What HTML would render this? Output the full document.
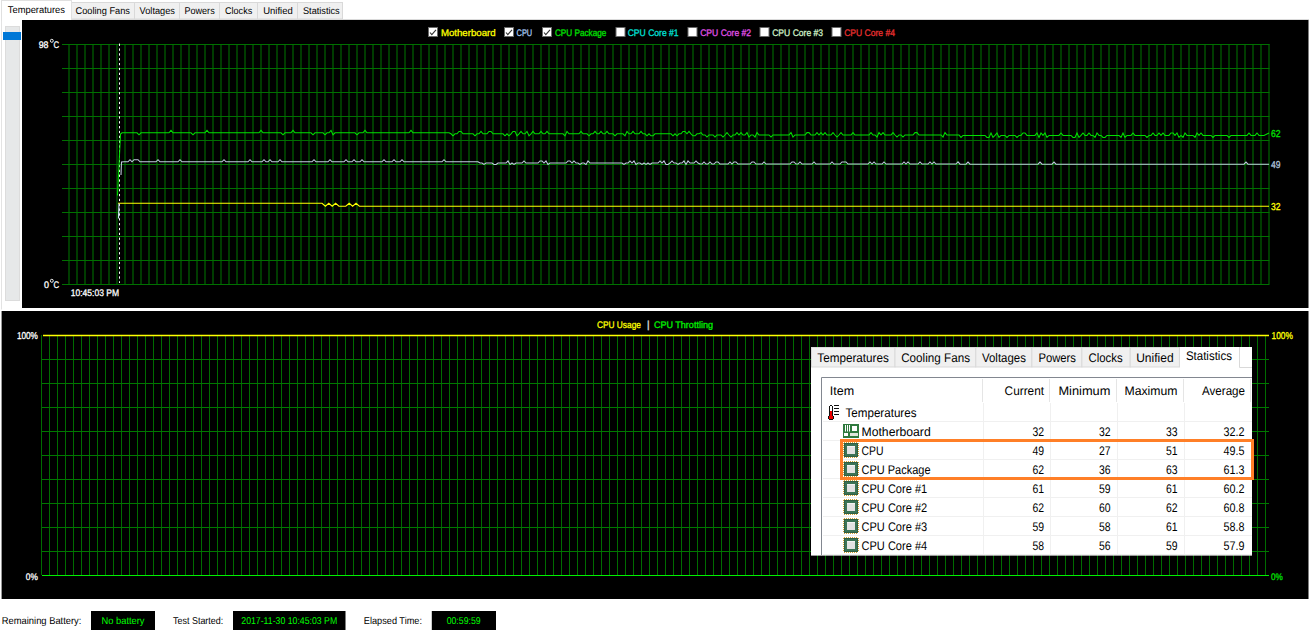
<!DOCTYPE html>
<html><head><meta charset="utf-8"><title>Stress Test</title>
<style>html,body{margin:0;padding:0;background:#fff;overflow:hidden;width:1310px;height:633px}svg{display:block}</style>
</head><body>
<svg width="1310" height="633" viewBox="0 0 1310 633" font-family='"Liberation Sans", sans-serif' text-rendering="geometricPrecision"><rect x="0" y="0" width="1310" height="633" fill="#ffffff"/>
<rect x="1" y="19" width="1308" height="291" fill="#ffffff"/>
<path d="M1.5 19.5 V309.5" stroke="#e3e3e3" stroke-width="1" fill="none"/>
<path d="M71 19.5 H1309" stroke="#dadada" stroke-width="1" fill="none"/>
<rect x="71.5" y="2.5" width="63" height="16.5" fill="#f0f0f0" stroke="#d9d9d9" stroke-width="1"/>
<text x="75.5" y="14.0" font-size="9.8" fill="#000" text-anchor="start" textLength="54.5" lengthAdjust="spacingAndGlyphs">Cooling Fans</text>
<rect x="134.5" y="2.5" width="45" height="16.5" fill="#f0f0f0" stroke="#d9d9d9" stroke-width="1"/>
<text x="139.6" y="14.0" font-size="9.8" fill="#000" text-anchor="start" textLength="35.3" lengthAdjust="spacingAndGlyphs">Voltages</text>
<rect x="179.5" y="2.5" width="40" height="16.5" fill="#f0f0f0" stroke="#d9d9d9" stroke-width="1"/>
<text x="184.4" y="14.0" font-size="9.8" fill="#000" text-anchor="start" textLength="30.3" lengthAdjust="spacingAndGlyphs">Powers</text>
<rect x="219.5" y="2.5" width="38" height="16.5" fill="#f0f0f0" stroke="#d9d9d9" stroke-width="1"/>
<text x="225.0" y="14.0" font-size="9.8" fill="#000" text-anchor="start" textLength="27.2" lengthAdjust="spacingAndGlyphs">Clocks</text>
<rect x="257.5" y="2.5" width="40" height="16.5" fill="#f0f0f0" stroke="#d9d9d9" stroke-width="1"/>
<text x="263.2" y="14.0" font-size="9.8" fill="#000" text-anchor="start" textLength="29.5" lengthAdjust="spacingAndGlyphs">Unified</text>
<rect x="297.5" y="2.5" width="45" height="16.5" fill="#f0f0f0" stroke="#d9d9d9" stroke-width="1"/>
<text x="303.0" y="14.0" font-size="9.8" fill="#000" text-anchor="start" textLength="36.7" lengthAdjust="spacingAndGlyphs">Statistics</text>
<rect x="1.5" y="0.5" width="70" height="19.5" fill="#ffffff" stroke="#e0e0e0" stroke-width="1"/>
<rect x="2" y="19" width="69" height="2" fill="#ffffff"/>
<text x="7.8" y="13.0" font-size="9.8" fill="#000" text-anchor="start" textLength="57.2" lengthAdjust="spacingAndGlyphs">Temperatures</text>
<rect x="5.5" y="26.5" width="14" height="274" fill="#e6e8e9" stroke="#dcdcdc" stroke-width="1"/>
<rect x="3" y="32" width="18" height="8" fill="#0078d7"/>
<rect x="22" y="20" width="1286.5" height="288" fill="#000000"/>
<path d="M69 44V284M77 44V284M85 44V284M93 44V284M101 44V284M109 44V284M117 44V284M125 44V284M133 44V284M141 44V284M149 44V284M157 44V284M165 44V284M173 44V284M181 44V284M189 44V284M197 44V284M205 44V284M213 44V284M221 44V284M229 44V284M237 44V284M245 44V284M253 44V284M261 44V284M269 44V284M277 44V284M285 44V284M293 44V284M301 44V284M309 44V284M317 44V284M325 44V284M333 44V284M341 44V284M349 44V284M357 44V284M365 44V284M373 44V284M381 44V284M389 44V284M397 44V284M405 44V284M413 44V284M421 44V284M429 44V284M437 44V284M445 44V284M453 44V284M461 44V284M469 44V284M477 44V284M485 44V284M493 44V284M501 44V284M509 44V284M517 44V284M525 44V284M533 44V284M541 44V284M549 44V284M557 44V284M565 44V284M573 44V284M581 44V284M589 44V284M597 44V284M605 44V284M613 44V284M621 44V284M629 44V284M637 44V284M645 44V284M653 44V284M661 44V284M669 44V284M677 44V284M685 44V284M693 44V284M701 44V284M709 44V284M717 44V284M725 44V284M733 44V284M741 44V284M749 44V284M757 44V284M765 44V284M773 44V284M781 44V284M789 44V284M797 44V284M805 44V284M813 44V284M821 44V284M829 44V284M837 44V284M845 44V284M853 44V284M861 44V284M869 44V284M877 44V284M885 44V284M893 44V284M901 44V284M909 44V284M917 44V284M925 44V284M933 44V284M941 44V284M949 44V284M957 44V284M965 44V284M973 44V284M981 44V284M989 44V284M997 44V284M1005 44V284M1013 44V284M1021 44V284M1029 44V284M1037 44V284M1045 44V284M1053 44V284M1061 44V284M1069 44V284M1077 44V284M1085 44V284M1093 44V284M1101 44V284M1109 44V284M1117 44V284M1125 44V284M1133 44V284M1141 44V284M1149 44V284M1157 44V284M1165 44V284M1173 44V284M1181 44V284M1189 44V284M1197 44V284M1205 44V284M1213 44V284M1221 44V284M1229 44V284M1237 44V284M1245 44V284M1253 44V284M1261 44V284M1269 44V284" stroke="#003c00" stroke-width="2" fill="none"/>
<path d="M62 44.5H1269.5M62 68.5H1269.5M62 92.5H1269.5M62 116.5H1269.5M62 140.5H1269.5M62 164.5H1269.5M62 188.5H1269.5M62 212.5H1269.5M62 236.5H1269.5M62 260.5H1269.5M62 284.5H1269.5" stroke="#007000" stroke-width="1" fill="none"/>
<rect x="428.5" y="27.5" width="9" height="9" fill="#ffffff" stroke="#6a6a6a" stroke-width="1"/>
<path d="M430 32.5L431.8 34.6L436 29.8" stroke="#333" stroke-width="1.1" fill="none"/>
<text x="440.9" y="36.0" font-size="9.5" fill="#ffff00" text-anchor="start" textLength="54.7" lengthAdjust="spacingAndGlyphs" stroke="#ffff00" stroke-width="0.3">Motherboard</text>
<rect x="504.5" y="27.5" width="9" height="9" fill="#ffffff" stroke="#6a6a6a" stroke-width="1"/>
<path d="M506 32.5L507.8 34.6L512 29.8" stroke="#333" stroke-width="1.1" fill="none"/>
<text x="516.6" y="36.0" font-size="9.5" fill="#a8c8f0" text-anchor="start" textLength="15.6" lengthAdjust="spacingAndGlyphs" stroke="#a8c8f0" stroke-width="0.3">CPU</text>
<rect x="542.5" y="27.5" width="9" height="9" fill="#ffffff" stroke="#6a6a6a" stroke-width="1"/>
<path d="M544 32.5L545.8 34.6L550 29.8" stroke="#333" stroke-width="1.1" fill="none"/>
<text x="554.9" y="36.0" font-size="9.5" fill="#00e000" text-anchor="start" textLength="51.5" lengthAdjust="spacingAndGlyphs" stroke="#00e000" stroke-width="0.3">CPU Package</text>
<rect x="616.0" y="27.5" width="9" height="9" fill="#ffffff" stroke="#6a6a6a" stroke-width="1"/>
<text x="627.7" y="36.0" font-size="9.5" fill="#00e0d8" text-anchor="start" textLength="50.9" lengthAdjust="spacingAndGlyphs" stroke="#00e0d8" stroke-width="0.3">CPU Core #1</text>
<rect x="688.0" y="27.5" width="9" height="9" fill="#ffffff" stroke="#6a6a6a" stroke-width="1"/>
<text x="700.2" y="36.0" font-size="9.5" fill="#e050e8" text-anchor="start" textLength="50.9" lengthAdjust="spacingAndGlyphs" stroke="#e050e8" stroke-width="0.3">CPU Core #2</text>
<rect x="760.0" y="27.5" width="9" height="9" fill="#ffffff" stroke="#6a6a6a" stroke-width="1"/>
<text x="772.2" y="36.0" font-size="9.5" fill="#d0f0c8" text-anchor="start" textLength="50.9" lengthAdjust="spacingAndGlyphs" stroke="#d0f0c8" stroke-width="0.3">CPU Core #3</text>
<rect x="832.0" y="27.5" width="9" height="9" fill="#ffffff" stroke="#6a6a6a" stroke-width="1"/>
<text x="844.2" y="36.0" font-size="9.5" fill="#e83030" text-anchor="start" textLength="50.8" lengthAdjust="spacingAndGlyphs" stroke="#e83030" stroke-width="0.3">CPU Core #4</text>
<text x="38.7" y="48.0" font-size="9.5" fill="#fff" text-anchor="start" textLength="9.8" lengthAdjust="spacingAndGlyphs" stroke="#fff" stroke-width="0.3">98</text>
<circle cx="51.8" cy="40.8" r="1.5" fill="none" stroke="#fff" stroke-width="0.9"/>
<text x="53.6" y="48.0" font-size="9.5" fill="#fff" text-anchor="start" textLength="5.6" lengthAdjust="spacingAndGlyphs" stroke="#fff" stroke-width="0.3">C</text>
<text x="44.0" y="288.0" font-size="9.5" fill="#fff" text-anchor="start" textLength="5.0" lengthAdjust="spacingAndGlyphs" stroke="#fff" stroke-width="0.3">0</text>
<circle cx="51.8" cy="280.8" r="1.5" fill="none" stroke="#fff" stroke-width="0.9"/>
<text x="53.6" y="288.0" font-size="9.5" fill="#fff" text-anchor="start" textLength="5.6" lengthAdjust="spacingAndGlyphs" stroke="#fff" stroke-width="0.3">C</text>
<text x="70.8" y="295.6" font-size="9.5" fill="#fff" text-anchor="start" textLength="48.2" lengthAdjust="spacingAndGlyphs" stroke="#fff" stroke-width="0.3">10:45:03 PM</text>
<text x="1271.0" y="137.0" font-size="10" fill="#00e000" text-anchor="start" textLength="9.5" lengthAdjust="spacingAndGlyphs" stroke="#00e000" stroke-width="0.3">62</text>
<text x="1271.0" y="168.0" font-size="10" fill="#b0c4de" text-anchor="start" textLength="9.5" lengthAdjust="spacingAndGlyphs" stroke="#b0c4de" stroke-width="0.3">49</text>
<text x="1271.0" y="210.0" font-size="10" fill="#ffff00" text-anchor="start" textLength="9.5" lengthAdjust="spacingAndGlyphs" stroke="#ffff00" stroke-width="0.3">32</text>
<path d="M119.5 43.6V283" stroke="#ffffff" stroke-width="1" stroke-dasharray="2.3,2.55" fill="none"/>
<path d="M118.0 203.3 L322.0 203.3 L325.4 206.2 L328.8 203.3 L332.2 206.2 L335.6 203.3 L339.0 206.2 L342.4 206.2 L345.8 206.2 L349.2 203.3 L352.6 206.2 L356.0 203.3 L359.4 206.2 L1269.0 206.2" stroke="#ffff00" stroke-width="1.1" fill="none" stroke-linejoin="miter"/>
<path d="M119 203.5 L118.5 218.5" stroke="#c8dcf0" stroke-width="1.2" fill="none"/>
<path d="M121.0 175.0 L121.5 162.0 L124.0 161.8 L126.0 161.8 L128.0 161.8 L130.0 159.7 L132.0 161.8 L134.0 159.7 L136.0 159.7 L138.0 159.7 L140.0 161.8 L142.0 161.8 L144.0 161.8 L146.0 161.8 L148.0 161.8 L150.0 161.8 L152.0 161.8 L154.0 161.8 L156.0 161.8 L158.0 159.7 L160.0 161.8 L162.0 161.8 L164.0 161.8 L166.0 161.8 L168.0 161.8 L170.0 161.8 L172.0 161.8 L174.0 161.8 L176.0 161.8 L178.0 161.8 L180.0 159.7 L182.0 161.8 L184.0 161.8 L186.0 161.8 L188.0 161.8 L190.0 161.8 L192.0 161.8 L194.0 161.8 L196.0 161.8 L198.0 161.8 L200.0 161.8 L202.0 161.8 L204.0 161.8 L206.0 161.8 L208.0 161.8 L210.0 161.8 L212.0 161.8 L214.0 161.8 L216.0 161.8 L218.0 161.8 L220.0 161.8 L222.0 161.8 L224.0 159.7 L226.0 161.8 L228.0 161.8 L230.0 161.8 L232.0 161.8 L234.0 161.8 L236.0 161.8 L238.0 161.8 L240.0 161.8 L242.0 161.8 L244.0 161.8 L246.0 161.8 L248.0 161.8 L250.0 159.7 L252.0 161.8 L254.0 161.8 L256.0 161.8 L258.0 161.8 L260.0 161.8 L262.0 161.8 L264.0 159.7 L266.0 161.8 L268.0 161.8 L270.0 159.7 L272.0 161.8 L274.0 161.8 L276.0 161.8 L278.0 161.8 L280.0 159.7 L282.0 161.8 L284.0 161.8 L286.0 161.8 L288.0 161.8 L290.0 161.8 L292.0 161.8 L294.0 161.8 L296.0 161.8 L298.0 161.8 L300.0 161.8 L302.0 161.8 L304.0 161.8 L306.0 161.8 L308.0 161.8 L310.0 161.8 L312.0 161.8 L314.0 159.7 L316.0 161.8 L318.0 161.8 L320.0 161.8 L322.0 161.8 L324.0 161.8 L326.0 161.8 L328.0 161.8 L330.0 159.7 L332.0 161.8 L334.0 161.8 L336.0 161.8 L338.0 161.8 L340.0 161.8 L342.0 161.8 L344.0 161.8 L346.0 159.7 L348.0 161.8 L350.0 161.8 L352.0 161.8 L354.0 159.7 L356.0 161.8 L358.0 161.8 L360.0 161.8 L362.0 159.7 L364.0 161.8 L366.0 161.8 L368.0 161.8 L370.0 161.8 L372.0 161.8 L374.0 161.8 L376.0 161.8 L378.0 161.8 L380.0 161.8 L382.0 161.8 L384.0 159.7 L386.0 161.8 L388.0 161.8 L390.0 161.8 L392.0 161.8 L394.0 159.7 L396.0 161.8 L398.0 161.8 L400.0 161.8 L402.0 159.7 L404.0 161.8 L406.0 161.8 L408.0 161.8 L410.0 161.8 L412.0 161.8 L414.0 161.8 L416.0 161.8 L418.0 161.8 L420.0 161.8 L422.0 161.8 L424.0 161.8 L426.0 161.8 L428.0 161.8 L430.0 161.8 L432.0 161.8 L434.0 161.8 L436.0 161.8 L438.0 161.8 L440.0 161.8 L442.0 161.8 L444.0 159.7 L446.0 161.8 L448.0 161.8 L450.0 161.8 L452.0 161.8 L454.0 161.8 L456.0 161.8 L458.0 161.8 L460.0 161.8 L462.0 161.8 L464.0 161.8 L466.0 161.8 L468.0 161.8 L470.0 161.8 L472.0 161.8 L474.0 161.8 L476.0 161.8 L478.0 161.8 L480.0 163.0 L482.0 163.0 L484.0 164.4 L486.0 163.0 L488.0 163.0 L490.0 163.0 L492.0 163.0 L494.0 164.4 L496.0 164.4 L498.0 163.0 L500.0 163.0 L502.0 163.0 L504.0 163.0 L506.0 163.0 L508.0 160.9 L510.0 164.4 L512.0 163.0 L514.0 164.4 L516.0 163.0 L518.0 163.0 L520.0 163.0 L522.0 163.0 L524.0 160.9 L526.0 163.0 L528.0 163.0 L530.0 163.0 L532.0 163.0 L534.0 163.0 L536.0 163.0 L538.0 163.0 L540.0 160.9 L542.0 160.9 L544.0 163.0 L546.0 160.9 L548.0 164.4 L550.0 163.0 L552.0 163.0 L554.0 163.0 L556.0 163.0 L558.0 163.0 L560.0 163.0 L562.0 163.0 L564.0 163.0 L566.0 163.0 L568.0 160.9 L570.0 160.9 L572.0 163.0 L574.0 160.9 L576.0 163.0 L578.0 163.0 L580.0 164.4 L582.0 163.0 L584.0 163.0 L586.0 164.4 L588.0 160.9 L590.0 163.0 L592.0 163.0 L594.0 163.0 L596.0 163.0 L598.0 163.0 L600.0 163.0 L602.0 163.0 L604.0 163.0 L606.0 163.0 L608.0 163.0 L610.0 163.0 L612.0 163.0 L614.0 163.0 L616.0 163.0 L618.0 163.0 L620.0 163.0 L622.0 163.0 L624.0 164.4 L626.0 163.0 L628.0 163.0 L630.0 160.9 L632.0 163.0 L634.0 160.9 L636.0 164.4 L638.0 163.0 L640.0 163.0 L642.0 164.4 L644.0 163.0 L646.0 164.4 L648.0 163.0 L650.0 164.4 L652.0 163.0 L654.0 163.0 L656.0 163.0 L658.0 163.0 L660.0 160.9 L662.0 163.0 L664.0 160.9 L666.0 164.4 L668.0 164.4 L670.0 163.0 L672.0 160.9 L674.0 163.0 L676.0 163.0 L678.0 164.4 L680.0 163.0 L682.0 163.0 L684.0 160.9 L686.0 164.4 L688.0 160.9 L690.0 163.0 L692.0 163.0 L694.0 163.0 L696.0 160.9 L698.0 163.0 L700.0 164.0 L702.0 164.0 L704.0 161.9 L706.0 164.0 L708.0 164.0 L710.0 161.9 L712.0 164.0 L714.0 164.0 L716.0 161.9 L718.0 161.9 L720.0 164.0 L722.0 164.0 L724.0 164.0 L726.0 164.0 L728.0 164.0 L730.0 161.9 L732.0 164.0 L734.0 161.9 L736.0 161.9 L738.0 164.0 L740.0 164.0 L742.0 164.0 L744.0 164.0 L746.0 164.0 L748.0 164.0 L750.0 164.0 L752.0 161.9 L754.0 161.9 L756.0 164.0 L758.0 164.0 L760.0 164.0 L762.0 164.0 L764.0 161.9 L766.0 164.0 L768.0 164.0 L770.0 164.0 L772.0 164.0 L774.0 164.0 L776.0 164.0 L778.0 164.0 L780.0 164.0 L782.0 164.0 L784.0 164.0 L786.0 164.0 L788.0 164.0 L790.0 164.0 L792.0 161.9 L794.0 161.9 L796.0 164.0 L798.0 164.0 L800.0 161.9 L802.0 164.0 L804.0 164.0 L806.0 164.0 L808.0 164.0 L810.0 164.0 L812.0 164.0 L814.0 161.9 L816.0 164.0 L818.0 164.0 L820.0 164.0 L822.0 164.0 L824.0 164.0 L826.0 164.0 L828.0 164.0 L830.0 164.0 L832.0 161.9 L834.0 164.0 L836.0 164.0 L838.0 164.0 L840.0 164.0 L842.0 161.9 L844.0 161.9 L846.0 161.9 L848.0 164.0 L850.0 164.0 L852.0 164.0 L854.0 164.0 L856.0 164.0 L858.0 164.0 L860.0 164.0 L862.0 164.0 L864.0 164.0 L866.0 164.0 L868.0 164.0 L870.0 161.9 L872.0 164.0 L874.0 161.9 L876.0 164.0 L878.0 164.0 L880.0 164.0 L882.0 164.0 L884.0 161.9 L886.0 164.0 L888.0 164.0 L890.0 164.0 L892.0 164.0 L894.0 164.0 L896.0 164.0 L898.0 164.0 L900.0 164.0 L902.0 164.0 L904.0 161.9 L906.0 164.0 L908.0 161.9 L910.0 164.0 L912.0 164.0 L914.0 164.0 L916.0 164.0 L918.0 164.0 L920.0 161.9 L922.0 164.0 L924.0 164.0 L926.0 164.0 L928.0 164.0 L930.0 161.9 L932.0 164.0 L934.0 161.9 L936.0 164.0 L938.0 164.0 L940.0 164.0 L942.0 164.0 L944.0 164.0 L946.0 164.0 L948.0 164.0 L950.0 164.0 L952.0 164.0 L954.0 164.0 L956.0 164.0 L958.0 161.9 L960.0 164.2 L962.0 164.2 L964.0 164.2 L966.0 164.2 L968.0 162.1 L970.0 164.2 L972.0 164.2 L974.0 164.2 L976.0 164.2 L978.0 164.2 L980.0 164.2 L982.0 164.2 L984.0 164.2 L986.0 164.2 L988.0 164.2 L990.0 164.2 L992.0 164.2 L994.0 164.2 L996.0 164.2 L998.0 164.2 L1000.0 164.2 L1002.0 164.2 L1004.0 164.2 L1006.0 164.2 L1008.0 164.2 L1010.0 164.2 L1012.0 164.2 L1014.0 164.2 L1016.0 164.2 L1018.0 164.2 L1020.0 164.2 L1022.0 164.2 L1024.0 164.2 L1026.0 164.2 L1028.0 164.2 L1030.0 164.2 L1032.0 164.2 L1034.0 164.2 L1036.0 164.2 L1038.0 164.2 L1040.0 162.1 L1042.0 164.2 L1044.0 164.2 L1046.0 164.2 L1048.0 164.2 L1050.0 164.2 L1052.0 164.2 L1054.0 162.1 L1056.0 164.2 L1058.0 164.2 L1060.0 164.2 L1062.0 164.2 L1064.0 164.2 L1066.0 164.2 L1068.0 164.2 L1070.0 164.2 L1072.0 164.2 L1074.0 164.2 L1076.0 164.2 L1078.0 164.2 L1080.0 164.2 L1082.0 164.2 L1084.0 164.2 L1086.0 164.2 L1088.0 164.2 L1090.0 164.2 L1092.0 164.2 L1094.0 164.2 L1096.0 164.2 L1098.0 164.2 L1100.0 164.2 L1102.0 164.2 L1104.0 164.2 L1106.0 164.2 L1108.0 164.2 L1110.0 164.2 L1112.0 164.2 L1114.0 164.2 L1116.0 164.2 L1118.0 164.2 L1120.0 164.2 L1122.0 164.2 L1124.0 164.2 L1126.0 164.2 L1128.0 164.2 L1130.0 164.2 L1132.0 164.2 L1134.0 164.2 L1136.0 164.2 L1138.0 164.2 L1140.0 164.2 L1142.0 164.2 L1144.0 164.2 L1146.0 164.2 L1148.0 164.2 L1150.0 164.2 L1152.0 164.2 L1154.0 164.2 L1156.0 164.2 L1158.0 164.2 L1160.0 164.2 L1162.0 164.2 L1164.0 164.2 L1166.0 164.2 L1168.0 164.2 L1170.0 164.2 L1172.0 164.2 L1174.0 164.2 L1176.0 164.2 L1178.0 164.2 L1180.0 164.2 L1182.0 164.2 L1184.0 164.2 L1186.0 164.2 L1188.0 164.2 L1190.0 164.2 L1192.0 164.2 L1194.0 164.2 L1196.0 164.2 L1198.0 164.2 L1200.0 164.2 L1202.0 164.2 L1204.0 164.2 L1206.0 164.2 L1208.0 164.2 L1210.0 164.2 L1212.0 164.2 L1214.0 164.2 L1216.0 164.2 L1218.0 164.2 L1220.0 164.2 L1222.0 164.2 L1224.0 164.2 L1226.0 164.2 L1228.0 164.2 L1230.0 164.2 L1232.0 164.2 L1234.0 164.2 L1236.0 164.2 L1238.0 164.2 L1240.0 164.2 L1242.0 164.2 L1244.0 164.2 L1246.0 162.1 L1248.0 164.2 L1250.0 164.2 L1252.0 164.2 L1254.0 164.2 L1256.0 164.2 L1258.0 164.2 L1260.0 164.2 L1262.0 164.2 L1269.0 164.2" stroke="#c0cce0" stroke-width="1.05" fill="none" stroke-linejoin="miter"/>
<path d="M117.5 195.5 L120.5 134.0 L122.0 132.8 L125.0 132.8 L127.0 132.8 L129.0 132.8 L131.0 132.8 L133.0 132.8 L135.0 132.8 L137.0 132.8 L139.0 134.8 L141.0 132.8 L143.0 132.8 L145.0 132.8 L147.0 132.8 L149.0 132.8 L151.0 132.8 L153.0 132.8 L155.0 132.8 L157.0 132.8 L159.0 132.8 L161.0 132.8 L163.0 132.8 L165.0 132.8 L167.0 132.8 L169.0 132.8 L171.0 130.4 L173.0 132.8 L175.0 132.8 L177.0 132.8 L179.0 132.8 L181.0 132.8 L183.0 132.8 L185.0 132.8 L187.0 132.8 L189.0 132.8 L191.0 132.8 L193.0 134.8 L195.0 132.8 L197.0 132.8 L199.0 132.8 L201.0 132.8 L203.0 132.8 L205.0 132.8 L207.0 130.4 L209.0 132.8 L211.0 132.8 L213.0 132.8 L215.0 132.8 L217.0 132.8 L219.0 132.8 L221.0 132.8 L223.0 132.8 L225.0 132.8 L227.0 132.8 L229.0 132.8 L231.0 132.8 L233.0 132.8 L235.0 132.8 L237.0 132.8 L239.0 132.8 L241.0 132.8 L243.0 132.8 L245.0 132.8 L247.0 132.8 L249.0 132.8 L251.0 132.8 L253.0 132.8 L255.0 132.8 L257.0 132.8 L259.0 132.8 L261.0 130.4 L263.0 132.8 L265.0 132.8 L267.0 132.8 L269.0 132.8 L271.0 132.8 L273.0 132.8 L275.0 132.8 L277.0 132.8 L279.0 132.8 L281.0 132.8 L283.0 134.8 L285.0 132.8 L287.0 132.8 L289.0 132.8 L291.0 132.8 L293.0 130.4 L295.0 132.8 L297.0 132.8 L299.0 132.8 L301.0 132.8 L303.0 132.8 L305.0 132.8 L307.0 132.8 L309.0 132.8 L311.0 132.8 L313.0 134.8 L315.0 132.8 L317.0 132.8 L319.0 132.8 L321.0 132.8 L323.0 132.8 L325.0 134.8 L327.0 132.8 L329.0 132.8 L331.0 130.4 L333.0 134.8 L335.0 132.8 L337.0 132.8 L339.0 132.8 L341.0 132.8 L343.0 132.8 L345.0 132.8 L347.0 132.8 L349.0 132.8 L351.0 132.8 L353.0 132.8 L355.0 132.8 L357.0 134.8 L359.0 132.8 L361.0 132.8 L363.0 132.8 L365.0 130.4 L367.0 132.8 L369.0 132.8 L371.0 132.8 L373.0 132.8 L375.0 132.8 L377.0 132.8 L379.0 132.8 L381.0 132.8 L383.0 132.8 L385.0 132.8 L387.0 132.8 L389.0 132.8 L391.0 132.8 L393.0 132.8 L395.0 132.8 L397.0 132.8 L399.0 132.8 L401.0 132.8 L403.0 132.8 L405.0 132.8 L407.0 132.8 L409.0 132.8 L411.0 130.4 L413.0 132.8 L415.0 132.8 L417.0 132.8 L419.0 132.8 L421.0 132.8 L423.0 132.8 L425.0 132.8 L427.0 132.8 L429.0 132.8 L431.0 132.8 L433.0 132.8 L435.0 132.8 L437.0 132.8 L439.0 132.8 L441.0 132.8 L443.0 132.8 L445.0 132.8 L447.0 132.8 L449.0 132.8 L451.0 133.8 L453.0 135.8 L455.0 133.8 L457.0 133.8 L459.0 131.4 L461.0 131.4 L463.0 133.8 L465.0 133.8 L467.0 133.8 L469.0 133.8 L471.0 133.8 L473.0 133.8 L475.0 135.8 L477.0 133.8 L479.0 133.8 L481.0 131.4 L483.0 133.8 L485.0 133.8 L487.0 133.8 L489.0 131.4 L491.0 131.4 L493.0 133.8 L495.0 133.8 L497.0 133.8 L499.0 133.8 L501.0 133.8 L503.0 133.8 L505.0 135.8 L507.0 133.8 L509.0 135.8 L511.0 133.8 L513.0 131.4 L515.0 131.4 L517.0 135.8 L519.0 133.8 L521.0 131.4 L523.0 133.8 L525.0 133.8 L527.0 131.4 L529.0 135.8 L531.0 133.8 L533.0 131.4 L535.0 133.8 L537.0 133.8 L539.0 133.8 L541.0 131.4 L543.0 133.8 L545.0 133.8 L547.0 131.4 L549.0 133.8 L551.0 133.8 L553.0 133.8 L555.0 133.8 L557.0 133.8 L559.0 133.8 L561.0 133.8 L563.0 133.8 L565.0 135.8 L567.0 131.4 L569.0 133.8 L571.0 133.8 L573.0 133.8 L575.0 133.8 L577.0 133.8 L579.0 133.8 L581.0 131.4 L583.0 133.8 L585.0 133.8 L587.0 133.8 L589.0 135.8 L591.0 133.8 L593.0 133.8 L595.0 131.4 L597.0 133.8 L599.0 133.8 L601.0 131.4 L603.0 133.8 L605.0 133.8 L607.0 131.4 L609.0 133.8 L611.0 133.8 L613.0 133.8 L615.0 135.8 L617.0 133.8 L619.0 133.8 L621.0 133.8 L623.0 133.8 L625.0 135.8 L627.0 131.4 L629.0 133.8 L631.0 133.8 L633.0 131.4 L635.0 133.8 L637.0 133.8 L639.0 133.8 L641.0 131.4 L643.0 133.8 L645.0 133.8 L647.0 135.8 L649.0 133.8 L651.0 135.8 L653.0 135.8 L655.0 133.8 L657.0 133.8 L659.0 133.8 L661.0 133.8 L663.0 133.8 L665.0 133.8 L667.0 133.8 L669.0 133.8 L671.0 133.8 L673.0 135.8 L675.0 133.8 L677.0 135.8 L679.0 133.8 L681.0 133.8 L683.0 131.4 L685.0 131.4 L687.0 133.8 L689.0 131.4 L691.0 133.8 L693.0 135.8 L695.0 135.8 L697.0 133.8 L699.0 133.8 L701.0 132.6 L703.0 135.0 L705.0 135.0 L707.0 137.0 L709.0 135.0 L711.0 135.0 L713.0 135.0 L715.0 137.0 L717.0 135.0 L719.0 135.0 L721.0 135.0 L723.0 137.0 L725.0 135.0 L727.0 132.6 L729.0 135.0 L731.0 137.0 L733.0 135.0 L735.0 135.0 L737.0 132.6 L739.0 135.0 L741.0 132.6 L743.0 135.0 L745.0 135.0 L747.0 132.6 L749.0 137.0 L751.0 135.0 L753.0 135.0 L755.0 137.0 L757.0 132.6 L759.0 135.0 L761.0 135.0 L763.0 135.0 L765.0 135.0 L767.0 135.0 L769.0 135.0 L771.0 137.0 L773.0 135.0 L775.0 135.0 L777.0 135.0 L779.0 135.0 L781.0 135.0 L783.0 135.0 L785.0 135.0 L787.0 135.0 L789.0 135.0 L791.0 132.6 L793.0 137.0 L795.0 135.0 L797.0 135.0 L799.0 135.0 L801.0 135.0 L803.0 135.0 L805.0 135.0 L807.0 132.6 L809.0 132.6 L811.0 135.0 L813.0 135.0 L815.0 135.0 L817.0 132.6 L819.0 135.0 L821.0 132.6 L823.0 135.0 L825.0 132.6 L827.0 135.0 L829.0 135.0 L831.0 135.0 L833.0 132.6 L835.0 135.0 L837.0 137.0 L839.0 135.0 L841.0 132.6 L843.0 135.0 L845.0 135.0 L847.0 135.0 L849.0 135.0 L851.0 135.0 L853.0 132.6 L855.0 135.0 L857.0 135.0 L859.0 135.0 L861.0 135.0 L863.0 135.0 L865.0 135.0 L867.0 135.0 L869.0 135.0 L871.0 132.6 L873.0 135.0 L875.0 135.0 L877.0 137.0 L879.0 132.6 L881.0 135.0 L883.0 132.6 L885.0 135.0 L887.0 135.0 L889.0 135.0 L891.0 135.0 L893.0 132.6 L895.0 135.0 L897.0 137.0 L899.0 135.0 L901.0 135.0 L903.0 137.0 L905.0 135.0 L907.0 135.0 L909.0 135.0 L911.0 135.0 L913.0 135.0 L915.0 132.6 L917.0 132.6 L919.0 135.0 L921.0 135.0 L923.0 135.0 L925.0 135.0 L927.0 135.0 L929.0 135.0 L931.0 135.0 L933.0 135.0 L935.0 135.0 L937.0 135.0 L939.0 135.0 L941.0 135.0 L943.0 137.0 L945.0 132.6 L947.0 135.0 L949.0 135.0 L951.0 135.0 L953.0 135.0 L955.0 135.0 L957.0 135.0 L959.0 135.0 L961.0 137.4 L963.0 135.4 L965.0 135.4 L967.0 135.4 L969.0 135.4 L971.0 135.4 L973.0 135.4 L975.0 135.4 L977.0 135.4 L979.0 135.4 L981.0 135.4 L983.0 135.4 L985.0 135.4 L987.0 137.4 L989.0 137.4 L991.0 133.0 L993.0 137.4 L995.0 135.4 L997.0 133.0 L999.0 137.4 L1001.0 135.4 L1003.0 135.4 L1005.0 135.4 L1007.0 137.4 L1009.0 135.4 L1011.0 135.4 L1013.0 135.4 L1015.0 135.4 L1017.0 137.4 L1019.0 135.4 L1021.0 135.4 L1023.0 133.0 L1025.0 133.0 L1027.0 135.4 L1029.0 135.4 L1031.0 135.4 L1033.0 135.4 L1035.0 135.4 L1037.0 133.0 L1039.0 137.4 L1041.0 133.0 L1043.0 135.4 L1045.0 133.0 L1047.0 137.4 L1049.0 135.4 L1051.0 135.4 L1053.0 135.4 L1055.0 135.4 L1057.0 135.4 L1059.0 135.4 L1061.0 133.0 L1063.0 135.4 L1065.0 135.4 L1067.0 135.4 L1069.0 135.4 L1071.0 135.4 L1073.0 137.4 L1075.0 137.4 L1077.0 133.0 L1079.0 137.4 L1081.0 135.4 L1083.0 133.0 L1085.0 135.4 L1087.0 135.4 L1089.0 133.0 L1091.0 135.4 L1093.0 135.4 L1095.0 137.4 L1097.0 133.0 L1099.0 135.4 L1101.0 135.4 L1103.0 137.4 L1105.0 137.4 L1107.0 135.4 L1109.0 135.4 L1111.0 135.4 L1113.0 135.4 L1115.0 135.4 L1117.0 135.4 L1119.0 135.4 L1121.0 137.4 L1123.0 133.0 L1125.0 137.4 L1127.0 135.4 L1129.0 135.4 L1131.0 135.4 L1133.0 133.0 L1135.0 135.4 L1137.0 135.4 L1139.0 135.4 L1141.0 135.4 L1143.0 135.4 L1145.0 135.4 L1147.0 137.4 L1149.0 135.4 L1151.0 135.4 L1153.0 133.0 L1155.0 135.4 L1157.0 135.4 L1159.0 133.0 L1161.0 135.4 L1163.0 133.0 L1165.0 135.4 L1167.0 135.4 L1169.0 135.4 L1171.0 133.0 L1173.0 133.0 L1175.0 135.4 L1177.0 133.0 L1179.0 137.4 L1181.0 135.4 L1183.0 137.4 L1185.0 133.0 L1187.0 135.4 L1189.0 135.4 L1191.0 135.4 L1193.0 135.4 L1195.0 137.4 L1197.0 133.0 L1199.0 135.4 L1201.0 133.0 L1203.0 135.4 L1205.0 135.4 L1207.0 135.4 L1209.0 135.4 L1211.0 135.4 L1213.0 137.4 L1215.0 135.4 L1217.0 135.4 L1219.0 135.4 L1221.0 135.4 L1223.0 135.4 L1225.0 135.4 L1227.0 135.4 L1229.0 137.4 L1231.0 135.4 L1233.0 135.4 L1235.0 135.4 L1237.0 135.4 L1239.0 135.4 L1241.0 135.4 L1243.0 135.4 L1245.0 135.4 L1247.0 135.4 L1249.0 133.0 L1251.0 135.4 L1253.0 135.4 L1255.0 135.4 L1257.0 133.0 L1259.0 135.4 L1261.0 135.4 L1264.0 135.4 L1269.0 133.0" stroke="#00e000" stroke-width="1.05" fill="none" stroke-linejoin="miter"/>
<rect x="1" y="311" width="1307.5" height="288" fill="#000000"/>
<path d="M1.5 311V599" stroke="#9a9a9a" stroke-width="1" fill="none"/>
<path d="M49.5 335V575M57.5 335V575M65.5 335V575M73.5 335V575M81.5 335V575M89.5 335V575M97.5 335V575M105.5 335V575M113.5 335V575M121.5 335V575M129.5 335V575M137.5 335V575M145.5 335V575M153.5 335V575M161.5 335V575M169.5 335V575M177.5 335V575M185.5 335V575M193.5 335V575M201.5 335V575M209.5 335V575M217.5 335V575M225.5 335V575M233.5 335V575M241.5 335V575M249.5 335V575M257.5 335V575M265.5 335V575M273.5 335V575M281.5 335V575M289.5 335V575M297.5 335V575M305.5 335V575M313.5 335V575M321.5 335V575M329.5 335V575M337.5 335V575M345.5 335V575M353.5 335V575M361.5 335V575M369.5 335V575M377.5 335V575M385.5 335V575M393.5 335V575M401.5 335V575M409.5 335V575M417.5 335V575M425.5 335V575M433.5 335V575M441.5 335V575M449.5 335V575M457.5 335V575M465.5 335V575M473.5 335V575M481.5 335V575M489.5 335V575M497.5 335V575M505.5 335V575M513.5 335V575M521.5 335V575M529.5 335V575M537.5 335V575M545.5 335V575M553.5 335V575M561.5 335V575M569.5 335V575M577.5 335V575M585.5 335V575M593.5 335V575M601.5 335V575M609.5 335V575M617.5 335V575M625.5 335V575M633.5 335V575M641.5 335V575M649.5 335V575M657.5 335V575M665.5 335V575M673.5 335V575M681.5 335V575M689.5 335V575M697.5 335V575M705.5 335V575M713.5 335V575M721.5 335V575M729.5 335V575M737.5 335V575M745.5 335V575M753.5 335V575M761.5 335V575M769.5 335V575M777.5 335V575M785.5 335V575M793.5 335V575M801.5 335V575M809.5 335V575M817.5 335V575M825.5 335V575M833.5 335V575M841.5 335V575M849.5 335V575M857.5 335V575M865.5 335V575M873.5 335V575M881.5 335V575M889.5 335V575M897.5 335V575M905.5 335V575M913.5 335V575M921.5 335V575M929.5 335V575M937.5 335V575M945.5 335V575M953.5 335V575M961.5 335V575M969.5 335V575M977.5 335V575M985.5 335V575M993.5 335V575M1001.5 335V575M1009.5 335V575M1017.5 335V575M1025.5 335V575M1033.5 335V575M1041.5 335V575M1049.5 335V575M1057.5 335V575M1065.5 335V575M1073.5 335V575M1081.5 335V575M1089.5 335V575M1097.5 335V575M1105.5 335V575M1113.5 335V575M1121.5 335V575M1129.5 335V575M1137.5 335V575M1145.5 335V575M1153.5 335V575M1161.5 335V575M1169.5 335V575M1177.5 335V575M1185.5 335V575M1193.5 335V575M1201.5 335V575M1209.5 335V575M1217.5 335V575M1225.5 335V575M1233.5 335V575M1241.5 335V575M1249.5 335V575M1257.5 335V575M1265.5 335V575" stroke="#006c00" stroke-width="1" fill="none"/>
<path d="M41.5 335V575" stroke="#006c00" stroke-width="1" fill="none"/>
<path d="M42 359.5H1269M42 383.5H1269M42 407.5H1269M42 431.5H1269M42 455.5H1269M42 479.5H1269M42 503.5H1269M42 527.5H1269M42 551.5H1269" stroke="#007800" stroke-width="1" fill="none"/>
<path d="M43 335.5H1269" stroke="#ffff00" stroke-width="1.3" fill="none"/>
<path d="M42 575.5H1269" stroke="#00ee00" stroke-width="1.2" fill="none"/>
<text x="16.9" y="339.0" font-size="10" fill="#fff" text-anchor="start" textLength="21.0" lengthAdjust="spacingAndGlyphs" stroke="#fff" stroke-width="0.3">100%</text>
<text x="25.8" y="579.5" font-size="9.5" fill="#fff" text-anchor="start" textLength="12.0" lengthAdjust="spacingAndGlyphs" stroke="#fff" stroke-width="0.3">0%</text>
<text x="1271.5" y="339.0" font-size="10" fill="#ffff00" text-anchor="start" textLength="21.3" lengthAdjust="spacingAndGlyphs" stroke="#ffff00" stroke-width="0.3">100%</text>
<text x="1271.0" y="579.5" font-size="9.5" fill="#00e000" text-anchor="start" textLength="11.8" lengthAdjust="spacingAndGlyphs" stroke="#00e000" stroke-width="0.3">0%</text>
<text x="597.0" y="327.5" font-size="9.5" fill="#ffff00" text-anchor="start" textLength="43.9" lengthAdjust="spacingAndGlyphs" stroke="#ffff00" stroke-width="0.3">CPU Usage</text>
<text x="647.0" y="327.5" font-size="10" fill="#e0e0e0" text-anchor="start" stroke="#e0e0e0" stroke-width="0.3">|</text>
<text x="653.9" y="327.5" font-size="9.5" fill="#00f000" text-anchor="start" textLength="59.1" lengthAdjust="spacingAndGlyphs" stroke="#00f000" stroke-width="0.3">CPU Throttling</text>
<rect x="811" y="347" width="441" height="208.6" fill="#ffffff"/>
<rect x="811" y="347" width="428" height="20" fill="#f0f0f0"/>
<rect x="811.5" y="347.5" width="83.5" height="19.5" fill="#f0f0f0" stroke="#d9d9d9" stroke-width="1"/>
<text x="817.3" y="362.0" font-size="12.5" fill="#000" text-anchor="start" textLength="71.6" lengthAdjust="spacingAndGlyphs">Temperatures</text>
<rect x="895.0" y="347.5" width="80.79999999999995" height="19.5" fill="#f0f0f0" stroke="#d9d9d9" stroke-width="1"/>
<text x="901.2" y="362.0" font-size="12.5" fill="#000" text-anchor="start" textLength="68.8" lengthAdjust="spacingAndGlyphs">Cooling Fans</text>
<rect x="975.8" y="347.5" width="56.100000000000136" height="19.5" fill="#f0f0f0" stroke="#d9d9d9" stroke-width="1"/>
<text x="982.0" y="362.0" font-size="12.5" fill="#000" text-anchor="start" textLength="43.9" lengthAdjust="spacingAndGlyphs">Voltages</text>
<rect x="1031.9" y="347.5" width="50.0" height="19.5" fill="#f0f0f0" stroke="#d9d9d9" stroke-width="1"/>
<text x="1038.4" y="362.0" font-size="12.5" fill="#000" text-anchor="start" textLength="37.6" lengthAdjust="spacingAndGlyphs">Powers</text>
<rect x="1081.9" y="347.5" width="48.299999999999955" height="19.5" fill="#f0f0f0" stroke="#d9d9d9" stroke-width="1"/>
<text x="1088.5" y="362.0" font-size="12.5" fill="#000" text-anchor="start" textLength="34.2" lengthAdjust="spacingAndGlyphs">Clocks</text>
<rect x="1130.2" y="347.5" width="49.200000000000045" height="19.5" fill="#f0f0f0" stroke="#d9d9d9" stroke-width="1"/>
<text x="1136.2" y="362.0" font-size="12.5" fill="#000" text-anchor="start" textLength="37.4" lengthAdjust="spacingAndGlyphs">Unified</text>
<rect x="1179" y="347" width="60" height="21" fill="#ffffff"/>
<path d="M1179.5 347V367.5M1239.5 347V367.5H1252" stroke="#d9d9d9" stroke-width="1" fill="none"/>
<text x="1185.9" y="360.0" font-size="12.5" fill="#000" text-anchor="start" textLength="46.0" lengthAdjust="spacingAndGlyphs">Statistics</text>
<path d="M821.5 555V377.5H1252" stroke="#828790" stroke-width="1" fill="none"/>
<path d="M982.5 379V402M1049.5 379V402M1116.5 379V402M1183.5 379V402M1250.5 379V402" stroke="#e5e5e5" stroke-width="1" fill="none"/>
<text x="829.8" y="395.0" font-size="12.5" fill="#000" text-anchor="start">Item</text>
<text x="1004.6" y="395.0" font-size="12.5" fill="#000" text-anchor="start" textLength="39.4" lengthAdjust="spacingAndGlyphs">Current</text>
<text x="1058.4" y="395.0" font-size="12.5" fill="#000" text-anchor="start" textLength="52.0" lengthAdjust="spacingAndGlyphs">Minimum</text>
<text x="1124.5" y="395.0" font-size="12.5" fill="#000" text-anchor="start" textLength="53.0" lengthAdjust="spacingAndGlyphs">Maximum</text>
<text x="1202.0" y="395.0" font-size="12.5" fill="#000" text-anchor="start" textLength="43.0" lengthAdjust="spacingAndGlyphs">Average</text>
<path d="M983.5 403V555M1050.5 403V555M1117.5 403V555M1184.5 403V555" stroke="#f0f0f0" stroke-width="1" fill="none"/>
<path d="M823 421.5H1252M823 440.5H1252M823 459.5H1252M823 478.5H1252M823 497.5H1252M823 516.5H1252M823 535.5H1252M823 554.5H1252" stroke="#f0f0f0" stroke-width="1" fill="none"/>
<g fill="#111"><rect x="829" y="406" width="1" height="10"/><rect x="832" y="406" width="1" height="10"/><rect x="830" y="405" width="2" height="1"/><rect x="828" y="416" width="1" height="3"/><rect x="833" y="416" width="1" height="3"/><rect x="829" y="419" width="4" height="1"/><rect x="834" y="405" width="5" height="1"/><rect x="834" y="408" width="5" height="1"/><rect x="834" y="411" width="5" height="1"/><rect x="834" y="414" width="5" height="1"/></g><rect x="830" y="406" width="2" height="5" fill="#fff"/><rect x="830" y="411" width="2" height="5" fill="#ee0000"/><rect x="829" y="416" width="4" height="3" fill="#ee0000"/>
<text x="845.5" y="417.0" font-size="12.5" fill="#000" text-anchor="start" textLength="71.0" lengthAdjust="spacingAndGlyphs">Temperatures</text>
<g transform="translate(843,424)"><rect x="0" y="0" width="16" height="14" fill="#2f7a3e"/><path d="M2.5 1V7.5M4.5 1V7.5M6.5 1V7.5" stroke="#ffffff" stroke-width="1"/><rect x="9" y="2" width="5" height="5" fill="#ffffff"/><rect x="1" y="9" width="4" height="3" fill="#ffffff"/><rect x="7" y="9" width="8" height="3" fill="#dfe6dc"/></g>
<text x="861.5" y="436.0" font-size="12.5" fill="#000" text-anchor="start" textLength="69.2" lengthAdjust="spacingAndGlyphs">Motherboard</text>
<text x="1032.4" y="436.0" font-size="12.5" fill="#000" text-anchor="start" textLength="11.6" lengthAdjust="spacingAndGlyphs">32</text>
<text x="1098.9" y="436.0" font-size="12.5" fill="#000" text-anchor="start" textLength="11.6" lengthAdjust="spacingAndGlyphs">32</text>
<text x="1166.0" y="436.0" font-size="12.5" fill="#000" text-anchor="start" textLength="11.6" lengthAdjust="spacingAndGlyphs">33</text>
<text x="1223.6" y="436.0" font-size="12.5" fill="#000" text-anchor="start" textLength="21.0" lengthAdjust="spacingAndGlyphs">32.2</text>
<g transform="translate(843,442)"><g fill="#d4a030"><rect x="1" y="0" width="1" height="1"/><rect x="1" y="15" width="1" height="1"/><rect x="0" y="1" width="1" height="1"/><rect x="15" y="1" width="1" height="1"/><rect x="3" y="0" width="1" height="1"/><rect x="3" y="15" width="1" height="1"/><rect x="0" y="3" width="1" height="1"/><rect x="15" y="3" width="1" height="1"/><rect x="5" y="0" width="1" height="1"/><rect x="5" y="15" width="1" height="1"/><rect x="0" y="5" width="1" height="1"/><rect x="15" y="5" width="1" height="1"/><rect x="7" y="0" width="1" height="1"/><rect x="7" y="15" width="1" height="1"/><rect x="0" y="7" width="1" height="1"/><rect x="15" y="7" width="1" height="1"/><rect x="9" y="0" width="1" height="1"/><rect x="9" y="15" width="1" height="1"/><rect x="0" y="9" width="1" height="1"/><rect x="15" y="9" width="1" height="1"/><rect x="11" y="0" width="1" height="1"/><rect x="11" y="15" width="1" height="1"/><rect x="0" y="11" width="1" height="1"/><rect x="15" y="11" width="1" height="1"/><rect x="13" y="0" width="1" height="1"/><rect x="13" y="15" width="1" height="1"/><rect x="0" y="13" width="1" height="1"/><rect x="15" y="13" width="1" height="1"/></g><rect x="1" y="1" width="14" height="14" fill="#2f5f45"/><rect x="2" y="2" width="12" height="12" fill="#3b7355"/><rect x="4" y="4" width="8" height="8" fill="#e2e2e2"/><rect x="4" y="4" width="8" height="1" fill="#f4f4f4"/></g>
<text x="861.5" y="455.0" font-size="12.5" fill="#000" text-anchor="start" textLength="22.0" lengthAdjust="spacingAndGlyphs">CPU</text>
<text x="1032.4" y="455.0" font-size="12.5" fill="#000" text-anchor="start" textLength="11.6" lengthAdjust="spacingAndGlyphs">49</text>
<text x="1098.9" y="455.0" font-size="12.5" fill="#000" text-anchor="start" textLength="11.6" lengthAdjust="spacingAndGlyphs">27</text>
<text x="1166.0" y="455.0" font-size="12.5" fill="#000" text-anchor="start" textLength="11.6" lengthAdjust="spacingAndGlyphs">51</text>
<text x="1223.6" y="455.0" font-size="12.5" fill="#000" text-anchor="start" textLength="21.0" lengthAdjust="spacingAndGlyphs">49.5</text>
<g transform="translate(843,461)"><g fill="#d4a030"><rect x="1" y="0" width="1" height="1"/><rect x="1" y="15" width="1" height="1"/><rect x="0" y="1" width="1" height="1"/><rect x="15" y="1" width="1" height="1"/><rect x="3" y="0" width="1" height="1"/><rect x="3" y="15" width="1" height="1"/><rect x="0" y="3" width="1" height="1"/><rect x="15" y="3" width="1" height="1"/><rect x="5" y="0" width="1" height="1"/><rect x="5" y="15" width="1" height="1"/><rect x="0" y="5" width="1" height="1"/><rect x="15" y="5" width="1" height="1"/><rect x="7" y="0" width="1" height="1"/><rect x="7" y="15" width="1" height="1"/><rect x="0" y="7" width="1" height="1"/><rect x="15" y="7" width="1" height="1"/><rect x="9" y="0" width="1" height="1"/><rect x="9" y="15" width="1" height="1"/><rect x="0" y="9" width="1" height="1"/><rect x="15" y="9" width="1" height="1"/><rect x="11" y="0" width="1" height="1"/><rect x="11" y="15" width="1" height="1"/><rect x="0" y="11" width="1" height="1"/><rect x="15" y="11" width="1" height="1"/><rect x="13" y="0" width="1" height="1"/><rect x="13" y="15" width="1" height="1"/><rect x="0" y="13" width="1" height="1"/><rect x="15" y="13" width="1" height="1"/></g><rect x="1" y="1" width="14" height="14" fill="#2f5f45"/><rect x="2" y="2" width="12" height="12" fill="#3b7355"/><rect x="4" y="4" width="8" height="8" fill="#e2e2e2"/><rect x="4" y="4" width="8" height="1" fill="#f4f4f4"/></g>
<text x="861.5" y="474.0" font-size="12.5" fill="#000" text-anchor="start" textLength="69.0" lengthAdjust="spacingAndGlyphs">CPU Package</text>
<text x="1032.4" y="474.0" font-size="12.5" fill="#000" text-anchor="start" textLength="11.6" lengthAdjust="spacingAndGlyphs">62</text>
<text x="1098.9" y="474.0" font-size="12.5" fill="#000" text-anchor="start" textLength="11.6" lengthAdjust="spacingAndGlyphs">36</text>
<text x="1166.0" y="474.0" font-size="12.5" fill="#000" text-anchor="start" textLength="11.6" lengthAdjust="spacingAndGlyphs">63</text>
<text x="1223.6" y="474.0" font-size="12.5" fill="#000" text-anchor="start" textLength="21.0" lengthAdjust="spacingAndGlyphs">61.3</text>
<g transform="translate(843,480)"><g fill="#d4a030"><rect x="1" y="0" width="1" height="1"/><rect x="1" y="15" width="1" height="1"/><rect x="0" y="1" width="1" height="1"/><rect x="15" y="1" width="1" height="1"/><rect x="3" y="0" width="1" height="1"/><rect x="3" y="15" width="1" height="1"/><rect x="0" y="3" width="1" height="1"/><rect x="15" y="3" width="1" height="1"/><rect x="5" y="0" width="1" height="1"/><rect x="5" y="15" width="1" height="1"/><rect x="0" y="5" width="1" height="1"/><rect x="15" y="5" width="1" height="1"/><rect x="7" y="0" width="1" height="1"/><rect x="7" y="15" width="1" height="1"/><rect x="0" y="7" width="1" height="1"/><rect x="15" y="7" width="1" height="1"/><rect x="9" y="0" width="1" height="1"/><rect x="9" y="15" width="1" height="1"/><rect x="0" y="9" width="1" height="1"/><rect x="15" y="9" width="1" height="1"/><rect x="11" y="0" width="1" height="1"/><rect x="11" y="15" width="1" height="1"/><rect x="0" y="11" width="1" height="1"/><rect x="15" y="11" width="1" height="1"/><rect x="13" y="0" width="1" height="1"/><rect x="13" y="15" width="1" height="1"/><rect x="0" y="13" width="1" height="1"/><rect x="15" y="13" width="1" height="1"/></g><rect x="1" y="1" width="14" height="14" fill="#2f5f45"/><rect x="2" y="2" width="12" height="12" fill="#3b7355"/><rect x="4" y="4" width="8" height="8" fill="#e2e2e2"/><rect x="4" y="4" width="8" height="1" fill="#f4f4f4"/></g>
<text x="861.5" y="493.0" font-size="12.5" fill="#000" text-anchor="start" textLength="65.7" lengthAdjust="spacingAndGlyphs">CPU Core #1</text>
<text x="1032.4" y="493.0" font-size="12.5" fill="#000" text-anchor="start" textLength="11.6" lengthAdjust="spacingAndGlyphs">61</text>
<text x="1098.9" y="493.0" font-size="12.5" fill="#000" text-anchor="start" textLength="11.6" lengthAdjust="spacingAndGlyphs">59</text>
<text x="1166.0" y="493.0" font-size="12.5" fill="#000" text-anchor="start" textLength="11.6" lengthAdjust="spacingAndGlyphs">61</text>
<text x="1223.6" y="493.0" font-size="12.5" fill="#000" text-anchor="start" textLength="21.0" lengthAdjust="spacingAndGlyphs">60.2</text>
<g transform="translate(843,499)"><g fill="#d4a030"><rect x="1" y="0" width="1" height="1"/><rect x="1" y="15" width="1" height="1"/><rect x="0" y="1" width="1" height="1"/><rect x="15" y="1" width="1" height="1"/><rect x="3" y="0" width="1" height="1"/><rect x="3" y="15" width="1" height="1"/><rect x="0" y="3" width="1" height="1"/><rect x="15" y="3" width="1" height="1"/><rect x="5" y="0" width="1" height="1"/><rect x="5" y="15" width="1" height="1"/><rect x="0" y="5" width="1" height="1"/><rect x="15" y="5" width="1" height="1"/><rect x="7" y="0" width="1" height="1"/><rect x="7" y="15" width="1" height="1"/><rect x="0" y="7" width="1" height="1"/><rect x="15" y="7" width="1" height="1"/><rect x="9" y="0" width="1" height="1"/><rect x="9" y="15" width="1" height="1"/><rect x="0" y="9" width="1" height="1"/><rect x="15" y="9" width="1" height="1"/><rect x="11" y="0" width="1" height="1"/><rect x="11" y="15" width="1" height="1"/><rect x="0" y="11" width="1" height="1"/><rect x="15" y="11" width="1" height="1"/><rect x="13" y="0" width="1" height="1"/><rect x="13" y="15" width="1" height="1"/><rect x="0" y="13" width="1" height="1"/><rect x="15" y="13" width="1" height="1"/></g><rect x="1" y="1" width="14" height="14" fill="#2f5f45"/><rect x="2" y="2" width="12" height="12" fill="#3b7355"/><rect x="4" y="4" width="8" height="8" fill="#e2e2e2"/><rect x="4" y="4" width="8" height="1" fill="#f4f4f4"/></g>
<text x="861.5" y="512.0" font-size="12.5" fill="#000" text-anchor="start" textLength="65.7" lengthAdjust="spacingAndGlyphs">CPU Core #2</text>
<text x="1032.4" y="512.0" font-size="12.5" fill="#000" text-anchor="start" textLength="11.6" lengthAdjust="spacingAndGlyphs">62</text>
<text x="1098.9" y="512.0" font-size="12.5" fill="#000" text-anchor="start" textLength="11.6" lengthAdjust="spacingAndGlyphs">60</text>
<text x="1166.0" y="512.0" font-size="12.5" fill="#000" text-anchor="start" textLength="11.6" lengthAdjust="spacingAndGlyphs">62</text>
<text x="1223.6" y="512.0" font-size="12.5" fill="#000" text-anchor="start" textLength="21.0" lengthAdjust="spacingAndGlyphs">60.8</text>
<g transform="translate(843,518)"><g fill="#d4a030"><rect x="1" y="0" width="1" height="1"/><rect x="1" y="15" width="1" height="1"/><rect x="0" y="1" width="1" height="1"/><rect x="15" y="1" width="1" height="1"/><rect x="3" y="0" width="1" height="1"/><rect x="3" y="15" width="1" height="1"/><rect x="0" y="3" width="1" height="1"/><rect x="15" y="3" width="1" height="1"/><rect x="5" y="0" width="1" height="1"/><rect x="5" y="15" width="1" height="1"/><rect x="0" y="5" width="1" height="1"/><rect x="15" y="5" width="1" height="1"/><rect x="7" y="0" width="1" height="1"/><rect x="7" y="15" width="1" height="1"/><rect x="0" y="7" width="1" height="1"/><rect x="15" y="7" width="1" height="1"/><rect x="9" y="0" width="1" height="1"/><rect x="9" y="15" width="1" height="1"/><rect x="0" y="9" width="1" height="1"/><rect x="15" y="9" width="1" height="1"/><rect x="11" y="0" width="1" height="1"/><rect x="11" y="15" width="1" height="1"/><rect x="0" y="11" width="1" height="1"/><rect x="15" y="11" width="1" height="1"/><rect x="13" y="0" width="1" height="1"/><rect x="13" y="15" width="1" height="1"/><rect x="0" y="13" width="1" height="1"/><rect x="15" y="13" width="1" height="1"/></g><rect x="1" y="1" width="14" height="14" fill="#2f5f45"/><rect x="2" y="2" width="12" height="12" fill="#3b7355"/><rect x="4" y="4" width="8" height="8" fill="#e2e2e2"/><rect x="4" y="4" width="8" height="1" fill="#f4f4f4"/></g>
<text x="861.5" y="531.0" font-size="12.5" fill="#000" text-anchor="start" textLength="65.7" lengthAdjust="spacingAndGlyphs">CPU Core #3</text>
<text x="1032.4" y="531.0" font-size="12.5" fill="#000" text-anchor="start" textLength="11.6" lengthAdjust="spacingAndGlyphs">59</text>
<text x="1098.9" y="531.0" font-size="12.5" fill="#000" text-anchor="start" textLength="11.6" lengthAdjust="spacingAndGlyphs">58</text>
<text x="1166.0" y="531.0" font-size="12.5" fill="#000" text-anchor="start" textLength="11.6" lengthAdjust="spacingAndGlyphs">61</text>
<text x="1223.6" y="531.0" font-size="12.5" fill="#000" text-anchor="start" textLength="21.0" lengthAdjust="spacingAndGlyphs">58.8</text>
<g transform="translate(843,537)"><g fill="#d4a030"><rect x="1" y="0" width="1" height="1"/><rect x="1" y="15" width="1" height="1"/><rect x="0" y="1" width="1" height="1"/><rect x="15" y="1" width="1" height="1"/><rect x="3" y="0" width="1" height="1"/><rect x="3" y="15" width="1" height="1"/><rect x="0" y="3" width="1" height="1"/><rect x="15" y="3" width="1" height="1"/><rect x="5" y="0" width="1" height="1"/><rect x="5" y="15" width="1" height="1"/><rect x="0" y="5" width="1" height="1"/><rect x="15" y="5" width="1" height="1"/><rect x="7" y="0" width="1" height="1"/><rect x="7" y="15" width="1" height="1"/><rect x="0" y="7" width="1" height="1"/><rect x="15" y="7" width="1" height="1"/><rect x="9" y="0" width="1" height="1"/><rect x="9" y="15" width="1" height="1"/><rect x="0" y="9" width="1" height="1"/><rect x="15" y="9" width="1" height="1"/><rect x="11" y="0" width="1" height="1"/><rect x="11" y="15" width="1" height="1"/><rect x="0" y="11" width="1" height="1"/><rect x="15" y="11" width="1" height="1"/><rect x="13" y="0" width="1" height="1"/><rect x="13" y="15" width="1" height="1"/><rect x="0" y="13" width="1" height="1"/><rect x="15" y="13" width="1" height="1"/></g><rect x="1" y="1" width="14" height="14" fill="#2f5f45"/><rect x="2" y="2" width="12" height="12" fill="#3b7355"/><rect x="4" y="4" width="8" height="8" fill="#e2e2e2"/><rect x="4" y="4" width="8" height="1" fill="#f4f4f4"/></g>
<text x="861.5" y="550.0" font-size="12.5" fill="#000" text-anchor="start" textLength="65.7" lengthAdjust="spacingAndGlyphs">CPU Core #4</text>
<text x="1032.4" y="550.0" font-size="12.5" fill="#000" text-anchor="start" textLength="11.6" lengthAdjust="spacingAndGlyphs">58</text>
<text x="1098.9" y="550.0" font-size="12.5" fill="#000" text-anchor="start" textLength="11.6" lengthAdjust="spacingAndGlyphs">56</text>
<text x="1166.0" y="550.0" font-size="12.5" fill="#000" text-anchor="start" textLength="11.6" lengthAdjust="spacingAndGlyphs">59</text>
<text x="1223.6" y="550.0" font-size="12.5" fill="#000" text-anchor="start" textLength="21.0" lengthAdjust="spacingAndGlyphs">57.9</text>
<rect x="841.5" y="440.5" width="411" height="38" fill="none" stroke="#ff7f27" stroke-width="3"/>
<text x="1.8" y="624.0" font-size="10" fill="#000" text-anchor="start" textLength="79.6" lengthAdjust="spacingAndGlyphs">Remaining Battery:</text>
<rect x="91" y="611" width="64" height="19" fill="#000"/>
<text x="101.6" y="624.0" font-size="10" fill="#00ff00" text-anchor="start" textLength="42.9" lengthAdjust="spacingAndGlyphs">No battery</text>
<text x="173.0" y="624.0" font-size="10" fill="#000" text-anchor="start" textLength="50.3" lengthAdjust="spacingAndGlyphs">Test Started:</text>
<rect x="233" y="611" width="112.5" height="19" fill="#000"/>
<text x="241.3" y="624.0" font-size="10" fill="#00ff00" text-anchor="start" textLength="95.9" lengthAdjust="spacingAndGlyphs">2017-11-30 10:45:03 PM</text>
<text x="363.8" y="624.0" font-size="10" fill="#000" text-anchor="start" textLength="58.2" lengthAdjust="spacingAndGlyphs">Elapsed Time:</text>
<rect x="431.8" y="611" width="64.2" height="19" fill="#000"/>
<text x="446.7" y="624.0" font-size="10" fill="#00ff00" text-anchor="start" textLength="33.9" lengthAdjust="spacingAndGlyphs">00:59:59</text></svg>
</body></html>
